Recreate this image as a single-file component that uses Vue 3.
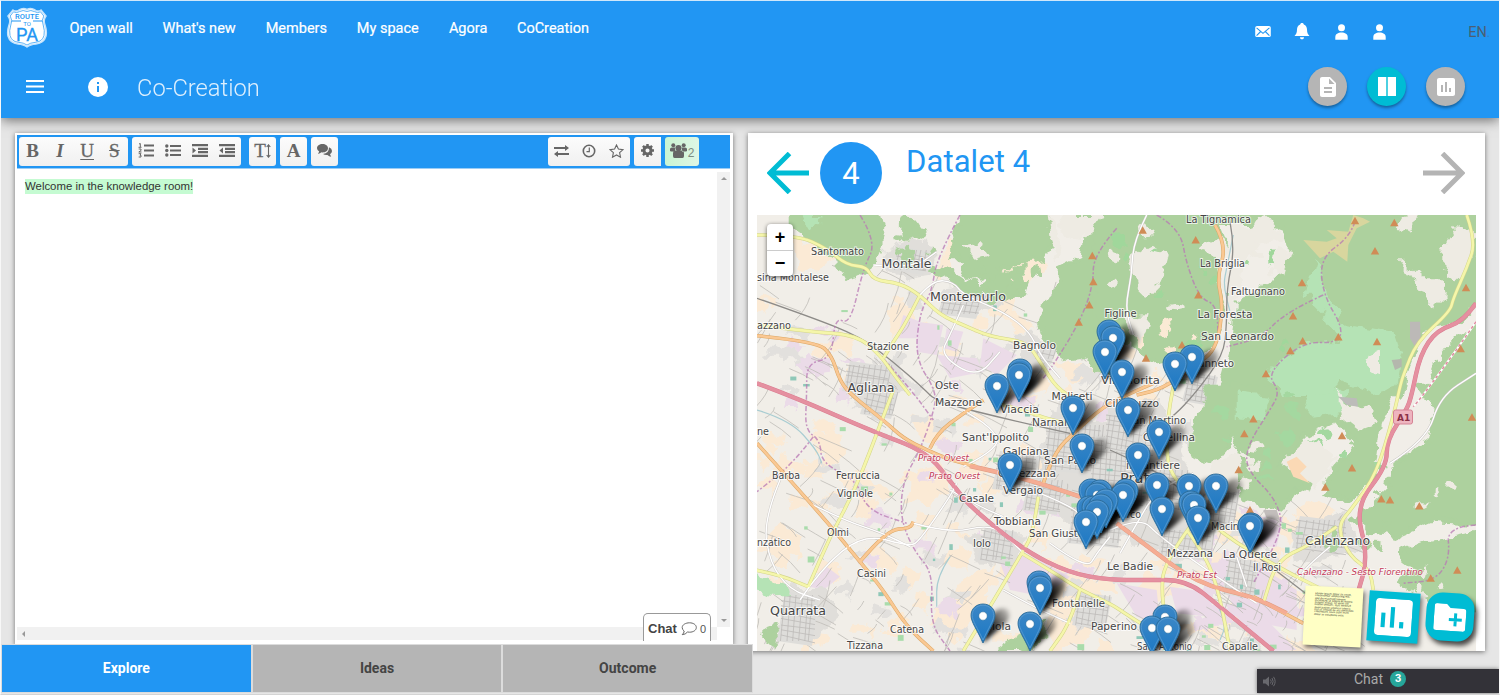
<script setup>
const nav = [
  ['Open wall', 64], ["What's new", 74], ['Members', 62], ['My space', 63], ['Agora', 39], ['CoCreation', 73],
]
const tabs = ['Explore', 'Ideas', 'Outcome']

/* Map geometry is kept in four sheets; each sheet has its own origin and a 1:3 scale. */
const origin = { A: [750, 125], B: [1110, 125], C: [750, 390], D: [1110, 390] }
const conv = (sheet, pts) => {
  const [ox, oy] = origin[sheet]
  return pts.trim().split(/\s+/).map((p) => {
    const [x, y] = p.split(',').map(Number)
    return [+(ox + x / 3).toFixed(1), +(oy + y / 3).toFixed(1)]
  })
}
const chain = (src) => {
  let out = []
  src.split('|').forEach((s) => { out = out.concat(conv(s[0], s.slice(1))) })
  return out
}
const poly = (src) => chain(src).map((p) => p.join(',')).join(' ')
const smooth = (src) => {
  const p = chain(src)
  let d = `M${p[0]}`
  for (let i = 1; i < p.length - 1; i++) {
    d += `Q${p[i]} ${(p[i][0] + p[i + 1][0]) / 2},${(p[i][1] + p[i + 1][1]) / 2}`
  }
  return d + `L${p[p.length - 1]}`
}

let seed = 11
const rnd = () => { seed = (seed * 16807) % 2147483647; return seed / 2147483647 }

const patches = []
const kinds = [['#fbead5', 140], ['#ebdbe8', 44], ['#e2e0dd', 65]]
kinds.forEach(([c, n]) => {
  for (let i = 0; i < n; i++) {
    const x = 757 + rnd() * 560
    const lim = x > 1190 ? 500 : 290
    const y = lim + rnd() * (655 - lim)
    const w = 8 + rnd() * 16
    const h = 6 + rnd() * 14
    const k = rnd() * 9 + 2
    patches.push({ c, p: `${x},${y} ${x + w},${y + k} ${x + w - k},${y + h + k} ${x + w / 2},${y + h} ${x - k},${y + h}` })
  }
})
const lanes = []
for (let i = 0; i < 380; i++) {
  const x = 757 + rnd() * 590
  const lim = x > 1190 ? 490 : 265
  const y = lim + rnd() * (655 - lim)
  const a = (rnd() < 0.5 ? 0.55 : 2.1) + (rnd() - 0.5) * 0.5
  const l = 9 + rnd() * 30
  lanes.push(`M${x},${y}q${Math.cos(a) * l * 0.5 + rnd() * 5},${Math.sin(a) * l * 0.5} ${Math.cos(a) * l},${Math.sin(a) * l}`)
}
const grids = []
;[[900, 250, 30, 20], [945, 298, 38, 16], [1040, 345, 18, 14], [850, 365, 42, 26], [868, 392, 30, 22], [785, 595, 34, 46],
  [985, 530, 32, 30], [1050, 425, 55, 45], [1095, 440, 62, 66], [1110, 415, 36, 34], [1075, 505, 50, 38], [1150, 470, 40, 40],
  [1205, 490, 35, 34], [1165, 530, 50, 26], [1300, 520, 50, 28], [1080, 595, 32, 30], [1000, 455, 40, 34], [1030, 480, 34, 30],
  [1190, 375, 28, 26], [1230, 560, 30, 34]].forEach(([x, y, w, h]) => {
  let d = ''
  for (let t = 0; t < w; t += 4 + rnd() * 3) d += `M${x + t},${y}l${-6 + rnd() * 3},${h}`
  for (let t = 0; t < h; t += 4 + rnd() * 3) d += `M${x - 4},${y + t}l${w},${4 + rnd() * 4}`
  grids.push({ box: `${x},${y - 4} ${x + w},${y + 2} ${x + w - 7},${y + h + 5} ${x - 8},${y + h}`, d })
})
const parks = []
for (let i = 0; i < 70; i++) {
  const x = 765 + rnd() * 540
  const lim = x > 1180 ? 520 : 300
  parks.push({ x, y: lim + rnd() * (650 - lim), w: 2 + rnd() * 5, h: 2 + rnd() * 4, c: i % 3 ? '#a9dcab' : '#8fc8b8' })
}
const glades = []
const glade = (x0, y0, w, h, n, c) => {
  for (let i = 0; i < n; i++) glades.push({ x: x0 + rnd() * w, y: y0 + rnd() * h, rx: 2 + rnd() * 6, ry: 2 + rnd() * 5, c })
}
glade(1110, 225, 150, 90, 9, '#eeebe3')
glade(1110, 320, 90, 50, 9, '#fbead5')
glade(1200, 440, 60, 70, 7, '#eeebe3')
glade(1060, 220, 240, 130, 14, '#a0d79b')
glade(1210, 390, 180, 90, 16, '#a4d8a0')
glade(1400, 485, 60, 30, 3, '#eeebe3')
glade(1410, 550, 50, 50, 4, '#eeebe3')
glade(890, 220, 70, 50, 12, '#add19e')
glade(950, 262, 90, 35, 14, '#add19e')
glade(1330, 510, 60, 45, 6, '#add19e')

const residential = [
  'A400,370 480,340 560,360 550,460 470,470 410,440', 'A560,490 640,480 760,530 690,560 590,530',
  'A340,740 440,700 480,790 400,810 290,810', 'C300,0 430,0 400,90 330,60', 'C110,590 230,600 260,690 200,740 90,720 130,650',
  'C900,60 1080,90 1080,470 980,420 860,300', 'D0,40 150,30 260,300 330,420 250,460 120,480 0,420',
  'D550,420 700,360 760,480 560,520', 'C640,430 820,430 800,530 690,520', 'A800,620 860,620 900,740 830,740',
]
const peach = [
  'A410,560 500,530 480,600 420,640', 'A770,410 890,400 880,440 800,500 790,560 860,610 810,620 720,560', 'A590,330 610,400 590,460 560,470',
  'A130,340 190,360 260,400 200,430 140,440', 'A910,700 1060,740 1040,760 960,770', 'C500,230 580,220 600,300 520,340 470,330',
  'C480,70 560,90 600,170 520,160', 'C260,260 340,330 390,320 350,230', 'C21,490 130,500 160,440 90,400', 'C880,500 1000,520 1080,640 1000,760 900,783',
  'C600,600 740,520 690,650 620,760 540,700', 'D580,330 670,360 640,440 540,450', 'D210,560 420,590 500,540 400,500',
]
const industrial = [
  'A460,570 510,590 500,640 440,640', 'A500,590 580,600 560,690 500,680', 'A590,610 640,620 620,680 580,670', 'A560,690 680,700 700,740 600,760', 'A700,640 800,690 740,750 690,720',
  'A150,700 240,700 240,740 160,750',
  'C740,490 850,500 960,560 880,620 780,600', 'C180,590 230,530 270,560 220,600', 'D20,580 140,600 150,700 80,680', 'D180,590 310,610 300,680 200,670',
  'D290,520 420,510 560,600 560,720 400,690', 'D340,640 440,660 560,780 480,783', 'D410,400 520,380 500,470 440,470',
]
const forest = [
  'A125,265 385,265 400,320 390,380 375,415 330,450 290,460 260,400 205,370 170,330 125,300',
  'A470,265 500,300 525,340 490,330 460,340 455,300', 'A605,400 600,350 635,265 885,265 905,350 880,400 790,410 750,440 780,480 830,470 820,510 720,520 700,470 640,450 650,400',
  'A540,440 580,430 640,470 700,490 690,520 620,480',
  'A960,265 1080,265 1100,310 1050,330 1000,350 990,400 930,430 940,470 900,510 870,590 890,650 950,700 1020,690 1050,740 1100,760 1100,265',
  'B-50,265 310,265 350,360 310,460 330,560 310,650 250,700 150,720 60,650 -50,620',
  'B395,265 1110,265 1110,350 1040,510 930,640 880,760 870,815 420,815 330,810 370,660 380,540 500,460 540,380 520,310',
  'D300,-10 870,-10 810,100 800,180 790,260 720,330 640,310 660,260 740,160 680,90 600,130 510,220 600,280 550,310 520,350 400,330 370,250 390,120 310,220 245,200 250,130',
  'B1110,600 1110,820 940,820 980,720 1040,640', 'B1110,380 1110,530 1050,590 970,600 1050,500',
  'D1110,-10 1110,400 970,390 850,440 770,420 750,380 830,300 840,230 880,210 960,150 980,60 930,-10',
  'D870,490 950,460 1110,430 1110,660 980,640 870,580 930,540', 'C740,783 860,710 880,700 880,740 800,783', 'C40,720 80,705 90,730 60,760',
]
const scrub = [
  'B620,410 590,510 640,560 690,650 580,655 470,745 510,810 660,810 700,770 790,810 860,790 875,700 850,625 710,600 660,520 635,470',
  'A150,270 215,270 210,300 170,305', 'C15,555 110,580 120,615 60,610 15,595', 'D380,10 480,20 460,90 380,80', 'D580,10 720,0 690,70 600,80', 'D600,230 620,180 670,210 640,260',
]
const clearings = [
  'A890,280 930,330 920,400 900,350', 'A940,270 1060,270 1010,340 960,330 920,300', 'A680,400 650,370 690,360 710,390',
  'B60,400 100,370 170,390 150,470 110,510 80,480', 'B270,370 340,340 350,400 300,390', 'B400,310 470,280 520,340 440,350 450,390 400,410 390,480 350,590 355,460 370,300', 'B500,370 540,380 520,450 480,440',
  'B1000,370 1040,310 1090,330 1080,410 1040,460 1000,430', 'B870,405 930,460 1000,460 1010,510 970,550 930,480', 'B770,700 810,680 810,750 780,740', 'B880,275 920,270 890,320 860,310',
  'D310,220 390,190 370,300 280,310', 'D680,10 720,60 770,40 800,100 750,120 700,80', 'D520,210 600,150 680,210 620,290 560,250', 'B50,580 110,570 90,650 60,620', 'D390,180 430,200 410,220',
]
const roads = [
  ['w', 'A370,420 490,430 560,380'], ['w', 'A510,510 550,465 610,470 640,510 760,560 840,620 870,690 930,760'], ['w', 'A640,540 600,630 570,690 680,760 750,680'],
  ['w', 'C90,270 40,390 60,520 120,600 210,630'], ['w', 'C150,630 210,540 340,430 480,470 510,450 600,320 620,280'], ['w', 'C180,340 280,390 400,430 480,470'],
  ['w', 'C490,400 600,430 710,405 760,430 820,490'], ['w', 'C760,600 850,650 960,700'], ['w', 'C600,300 690,350 760,380'],
  ['w', 'C640,230 760,170 720,110 640,60'], ['w', 'C870,310 970,350 1000,390'], ['w', 'C900,460 1010,540 1040,490 1080,440'],
  ['w', 'B110,270 70,350 65,450 45,550 70,630'], ['w', 'D0,420 90,380 150,440 290,540 440,640'], ['w', 'D30,490 80,400 140,300 250,250'],
  ['w', 'D840,220 950,150 990,20 1098,-50'], ['w', 'D660,470 600,520 560,570'], ['w', 'D380,500 410,590'],
  ['y', 'A21,330 140,330 230,370 290,420 350,425 370,465 450,475 510,510 570,570 640,600 720,635 830,650 870,710 920,790 |C980,30'],
  ['y', 'A510,510 470,590 430,650 400,700'], ['y', 'C430,0 370,160 310,310 240,440 175,590'], ['y', 'A21,600 180,620 320,630 390,690 440,760 480,810'],
  ['y', 'C15,540 90,555 175,590'], ['y', 'C865,320 850,430 815,490 720,650 640,783'], ['y', 'C815,490 900,540 990,600 1080,640|D60,680 140,730'],
  ['y', 'C990,600 960,700 900,783'], ['y', 'C740,40 820,60 900,90 960,100'],
  ['y', 'B1070,270 1098,350 1070,430 1030,520 1020,560 920,650 880,750|D870,-10 850,80 800,250 730,350 680,410 720,500 780,540 790,600'],
  ['y', 'D680,410 600,465 500,510 460,640'], ['y', 'D240,410 160,520 155,620 170,700'], ['y', 'D230,420 290,500 330,620 360,783'], ['y', 'D190,-10 150,190 230,320 330,430 520,540 640,600'],
  ['o', 'A21,632 200,650 245,690 270,770 310,815|C400,90 460,145 530,180 600,210 680,230'], ['o', 'C21,160 210,370 330,515 400,600 470,710 550,783'],
  ['o', 'C330,515 410,420 480,415 490,395'], ['o', 'C540,175 560,130 640,70 700,30'], ['o', 'C880,280 910,190 980,120 1060,50|D60,10 130,-20'],
  ['o', 'B315,300 350,360 320,460 340,540 320,670 260,720 160,790 80,810'], ['o', 'D430,620 580,700'],
  ['s', 'C660,228 760,250 870,280 990,320'], ['s', 'D20,400 100,460 260,580 430,620 530,670'],
  ['p', 'A21,775 130,815|C370,125 530,185 610,285 660,350 820,480 960,550 1080,570|D100,570 230,570 330,650 490,783'],
  ['p', 'B1098,535 1060,590 980,615 930,690 905,810|D890,60 830,150 830,230 735,350 775,500 740,620'],
]
const style = { w: ['#c9c5c2', 2.2, '#fff', 1.4], y: ['#d3d58a', 3.6, '#f5f6aa', 2.6], o: ['#dba765', 3.6, '#fac893', 2.6], s: ['#df9a80', 4.4, '#f5ad94', 3.6], p: ['#d97b90', 4.4, '#e590a0', 3.6] }
const drawn = roads.map(([k, s]) => ({ k, d: smooth(s) }))
const rails = ['A21,520 180,575 330,635 430,710 520,790|C560,35 760,85 960,130', 'D0,180 70,210 200,280 300,400 430,490 600,620', 'B360,290 375,370 350,490 350,600 340,690 260,800|D190,80 150,100']
const borders = [
  'A630,270 560,400 545,500 510,560 495,700 560,800|C550,70 510,180 460,270 450,380 490,480 550,550 540,700 600,783',
  'A330,270 380,350 340,430 300,600 255,575 245,700 170,715 170,810|C165,120 210,150 215,220 320,270 350,360 470,400', 'C190,140 130,220 21,305',
  'A1100,310 1030,390 1030,480 990,590 910,720 880,760', 'B140,270 210,310 230,420 270,520 320,540 325,640',
  'B735,290 720,335 630,400 640,510 700,610 680,655 580,650 470,745 510,800|D480,60 410,170 410,240 500,330 520,420 430,580',
  'B640,510 530,560 450,640 350,665', 'D1098,405 1010,410 1020,500 980,570 880,580', 'A400,700 480,790|C550,90',
]
const streams = ['C21,60 120,90 200,180 215,220', 'B370,330 350,430 340,480 360,560', 'D320,640 350,700 330,750', 'C600,500 560,560 560,650']
const peaks = chain('B98,316 257,345 735,287 853,293 795,378 576,473 265,510 549,573 685,636 578,648 541,677 801,650 468,746 108,700 216,660 1068,488 1052,671|A1027,392 1030,470 1018,540 986,592|D430,87 403,131 696,137 726,234 386,239 646,292 814,327 840,330 928,348 420,360 1086,82 1042,541 962,565')

const labels = [
  ['Santomato', 811, 254.5, 53], ['Montale', 881.5, 268, 50, 1], ['Montemurlo', 930, 300.5, 76, 1], ['sina Montalese', 757, 281, 72],
  ['azzano', 757, 328.5, 34], ['Stazione', 867, 350, 42], ['Bagnolo', 1013, 348.5, 43], ['Agliana', 847.5, 392, 47, 1], ['Oste', 935, 388.5, 24],
  ['La Tignamica', 1186, 223, 65], ['La Briglia', 1200, 266.5, 45], ['Faltugnano', 1231, 294.5, 54], ['La Foresta', 1197.5, 318, 55],
  ['San Leonardo', 1201, 339.5, 73], ['Figline', 1104.5, 316.5, 32], ['Canneto', 1191, 367, 43], ['Villafiorita', 1101, 383.5, 59],
  ['Mazzone', 935, 405.5, 47], ['Viaccia', 1000, 412.5, 39], ['Maliseti', 1051.5, 400, 41], ['Narnali', 1032, 425.5, 38],
  ['Cilianuzzo', 1105, 407, 54], ['San Martino', 1127, 424, 59], ['Castellina', 1143, 441, 52], ["Sant'Ippolito", 962, 441, 67],
  ['Galciana', 1003, 455, 46], ['San Paolo', 1044, 463.5, 52], ['Prato Ovest', 918, 460.5, 51, 2], ['Prato Ovest', 929, 478.5, 51, 2],
  ['Capezzana', 998, 477, 58], ['Vergaio', 1003, 494, 40], ['Casale', 959, 502, 35], ['Tobbiana', 994, 524.5, 47], ['San Giusto', 1029, 537, 55],
  ['Iolo', 973, 546.5, 18], ['ne', 757, 434.5, 12], ['Barba', 772, 479, 28], ['Ferruccia', 836, 479, 44], ['Vignole', 837, 497, 36],
  ['Olmi', 827, 535.5, 22], ['nzatico', 757, 546, 34], ['Casini', 857, 576.5, 29], ['Quarrata', 770, 615, 56, 1], ['Catena', 890, 633, 34],
  ['Tizzana', 847, 649, 36], ['Fontanelle', 1052, 607, 53], ['Paperino', 1091, 630, 46], ['Viola', 985, 630, 26], ['il Cantiere', 1126, 469, 54],
  ['Prato', 1120, 483, 38, 3], ['San Marco', 1092, 518, 49], ['Macinaia', 1211, 530, 42], ['Mezzana', 1167, 557, 46], ['La Querce', 1223, 558, 54],
  ['Il Rosi', 1253, 571, 28], ['Le Badie', 1107, 570, 46], ['Prato Est', 1177, 577.5, 40, 2], ['Calenzano', 1305, 544.5, 65, 1],
  ['Calenzano - Sesto Fiorentino', 1297, 574.5, 126, 2], ['Capalle', 1222, 650, 36], ["Sant'Antonio", 1137, 650, 55],
]
const cls = ['small', 'town', 'exit', 'city']
const pins = [
  [1109, 332], [1113, 338], [1105, 352], [1122, 372], [1192, 357], [1175, 364], [1020, 371], [1019, 375], [997, 386], [1073, 408],
  [1128, 410], [1159, 432], [1082, 446], [1138, 455], [1010, 465], [1157, 485], [1189, 486], [1216, 486], [1091, 491], [1100, 492], [1126, 491], [1123, 495],
  [1097, 495], [1106, 501], [1191, 503], [1194, 505], [1162, 509], [1089, 508], [1094, 508], [1101, 506], [1097, 512], [1198, 518], [1086, 522],
  [1251, 525], [1250, 526], [1039, 583], [1040, 588], [983, 616], [1030, 624], [1165, 617], [1152, 628], [1168, 629],
]
</script>

<template>
  <div class="page">
    <header class="top">
      <div class="nav-row">
        <svg class="logo" viewBox="0 0 42 42" width="42" height="42">
          <path d="M7 3 Q10 5 13 3 Q17 .5 21 2.500 Q25 .5 29 3 Q32 5 35 3 L40 9 Q37 13 39 18 Q41 24 40 29 Q38 36 30 37 Q24 37.500 21 40 Q18 37.500 12 37 Q4 36 2 29 Q1 24 3 18 Q5 13 2 9Z" fill="#fff" stroke="#c5e4fd" stroke-width="1.500" />
          <path d="M7.500 4.800 Q10.500 6.500 13.500 4.600 Q17 2.500 21 4.500 Q25 2.500 28.500 4.600 Q31.500 6.500 34.500 4.800 L37.800 9 Q35 13.500 37.200 18 Q39 24 38 28.500 Q36.500 34.500 30 35.200 Q24 35.800 21 38 Q18 35.800 12 35.200 Q5.500 34.500 4 28.500 Q3 24 4.800 18 Q7 13.500 4.200 9Z" fill="none" stroke="#4eabf5" stroke-width=".9" />
          <path d="M5.500 14H15M27 14H36.500" stroke="#2196f3" stroke-width="1.100" />
          <text x="21" y="12" text-anchor="middle" class="lg1" textLength="24">ROUTE</text>
          <text x="21" y="18.700" text-anchor="middle" class="lg2">TO</text>
          <text x="21" y="34" text-anchor="middle" class="lg3" textLength="22" lengthAdjust="spacingAndGlyphs">PA</text>
        </svg>
        <nav><a v-for="n in nav" :key="n[0]" :style="{ width: n[1] + 'px' }">{{ n[0] }}</a></nav>
        <div class="status">
          <svg width="16" height="11" viewBox="0 0 17 12"><rect width="17" height="12" rx="2" fill="#fff" /><path d="M1.500 2 8.500 8 15.500 2M1.500 10.500 6 6M15.500 10.500 11 6" fill="none" stroke="#2196f3" stroke-width="1.200" /></svg>
          <svg width="16" height="17" viewBox="0 0 16 17"><path d="M8 0C9 0 9.700.6 9.800 1.400 12 2.200 13 4.200 13 6.500 13 10 14 11.500 15.500 13H.5C2 11.500 3 10 3 6.500 3 4.200 4 2.200 6.200 1.400 6.300.6 7 0 8 0ZM6 14.200H10C10 15.500 9.200 16.300 8 16.300S6 15.500 6 14.200Z" fill="#fff" /></svg>
          <svg v-for="i in 2" :key="i" width="13" height="16" viewBox="0 0 13 16"><circle cx="6.500" cy="3.700" r="3.500" fill="#fff" /><path d="M.3 15.700V13C.3 10 3 8.400 6.500 8.400S12.700 10 12.700 13V15.700Z" fill="#fff" /></svg>
        </div>
        <span class="lang">EN<i>.</i></span>
      </div>
      <div class="title-row">
        <svg class="menu" width="18" height="13" viewBox="0 0 18 13"><path d="M0 1H18M0 6.500H18M0 12H18" stroke="#fff" stroke-width="1.900" /></svg>
        <svg class="info" width="20" height="20" viewBox="0 0 20 20"><circle cx="10" cy="10" r="10" fill="#fff" /><path d="M9 5h2v2H9ZM9 9h2v6H9Z" fill="#2196f3" /></svg>
        <h1>Co-Creation</h1>
        <div class="rounds">
          <button><svg viewBox="0 0 24 24" width="24" height="24"><path fill="#fff" d="M14 2H6c-1.100 0-1.990.9-1.990 2L4 20c0 1.100.89 2 1.990 2H18c1.100 0 2-.9 2-2V8l-6-6zm2 16H8v-2h8v2zm0-4H8v-2h8v2zm-3-5V3.500L18.500 9H13z" /></svg></button>
          <button class="on"><svg viewBox="0 0 18 19" width="18" height="19"><path fill="#fff" d="M0 0H8.300V19H0ZM9.700 0H18V19H9.700Z" /></svg></button>
          <button><svg viewBox="0 0 24 24" width="24" height="24"><path fill="#fff" d="M19 3H5c-1.100 0-2 .9-2 2v14c0 1.100.9 2 2 2h14c1.100 0 2-.9 2-2V5c0-1.100-.9-2-2-2zM9 17H7v-7h2v7zm4 0h-2V7h2v10zm4 0h-2v-4h2v4z" /></svg></button>
        </div>
      </div>
    </header>

    <main>
      <section class="editor">
        <div class="toolbar">
          <div class="grp">
            <b class="t">B</b><i class="t it">I</i><span class="t un">U</span><span class="t st">S</span>
          </div>
          <div class="grp g2">
            <span class="ic"><svg width="16" height="15" viewBox="0 0 16 15"><path d="M6 2.500H16M6 7.500H16M6 12.500H16" stroke="#666" stroke-width="2" /><path d="M1 1 2.300.5V4M.5 4.300H3.500M.7 6H3V7.500L.8 9H3.500M.7 10.700H3L2 12.300H3V14H.7" fill="none" stroke="#666" stroke-width="1" /></svg></span>
            <span class="ic"><svg width="16" height="13" viewBox="0 0 16 13"><path d="M5 2H16M5 6.500H16M5 11H16" stroke="#666" stroke-width="2.200" /><circle cx="1.800" cy="2" r="1.700" fill="#666" /><circle cx="1.800" cy="6.500" r="1.700" fill="#666" /><circle cx="1.800" cy="11" r="1.700" fill="#666" /></svg></span>
            <span class="ic"><svg width="16" height="13" viewBox="0 0 16 13"><path d="M0 1.200H16M6 4.800H16M6 8.200H16M0 11.800H16" stroke="#666" stroke-width="2.300" /><path d="M.5 3.500 4 6.500.5 9.500Z" fill="#666" /></svg></span>
            <span class="ic"><svg width="16" height="13" viewBox="0 0 16 13"><path d="M0 1.200H16M6 4.800H16M6 8.200H16M0 11.800H16" stroke="#666" stroke-width="2.300" /><path d="M4 3.500.5 6.500 4 9.500Z" fill="#666" /></svg></span>
          </div>
          <div class="grp one g3"><span class="t th">T<svg width="5" height="14" viewBox="0 0 5 14"><path d="M2.500 1V13M.7 3 2.500.8 4.300 3M.7 11 2.500 13.200 4.300 11" fill="none" stroke="#666" stroke-width="1.100" /></svg></span></div>
          <div class="grp one"><b class="t">A</b></div>
          <div class="grp one"><span class="ic"><svg width="15" height="13" viewBox="0 0 15 13"><path d="M5.500 0C8.600 0 11 1.800 11 4.200S8.600 8.400 5.500 8.400L4.500 8.300Q3 9.700 1 9.900L2.200 7.500Q0 6.300 0 4.200C0 1.800 2.400 0 5.500 0Z" fill="#666" /><path d="M12 3.200Q15 4.500 15 7 15 9 13 10.200L14.200 12.700Q12 12.500 10.500 11L9.500 11.100Q7.500 11.100 6 10 12 9.300 12 3.200Z" fill="#666" /></svg></span></div>
          <div class="grp right">
            <span class="ic"><svg width="15" height="12" viewBox="0 0 15 12"><path d="M0 3H12M3 9H15" stroke="#666" stroke-width="1.800" /><path d="M11 0 15 3 11 6ZM4 6 0 9 4 12Z" fill="#666" /></svg></span>
            <span class="ic"><svg width="14" height="14" viewBox="0 0 14 14"><circle cx="7" cy="7" r="5.700" fill="none" stroke="#666" stroke-width="1.600" /><path d="M7.300 3.500V7.600H4.500" fill="none" stroke="#666" stroke-width="1.200" /></svg></span>
            <span class="ic"><svg width="15" height="14" viewBox="0 0 15 14"><path d="M7.500 1 9.400 5.100 14 5.600 10.600 8.700 11.500 13.200 7.500 11 3.500 13.200 4.400 8.700 1 5.600 5.600 5.100Z" fill="none" stroke="#666" stroke-width="1.100" /></svg></span>
          </div>
          <div class="grp one sq"><span class="ic"><svg width="13" height="13" viewBox="0 0 14 14"><circle cx="7" cy="7" r="3.800" fill="none" stroke="#666" stroke-width="3.200" /><path d="M7 0V3M7 11V14M0 7H3M11 7H14M2.100 2.100 4 4M10 10 11.900 11.900M11.900 2.100 10 4M4 10 2.100 11.900" stroke="#666" stroke-width="2.700" /></svg></span></div>
          <div class="grp users">
            <svg width="17" height="15" viewBox="0 0 17 15"><circle cx="3.300" cy="2.200" r="2" fill="#666" /><circle cx="13.700" cy="2.200" r="2" fill="#666" /><path d="M0 8V6Q0 4.400 2 4.400H5V8.500H1ZM17 8V6Q17 4.400 15 4.400H12V8.500H16ZM3 13V10Q3 7.600 5.500 7.600H11.500Q14 7.600 14 10V13Q14 15 12.500 15H4.500Q3 15 3 13Z" fill="#666" /><circle cx="8.500" cy="5" r="3.100" fill="#666" /></svg><span>2</span>
          </div>
        </div>
        <div class="pad">
          <div class="text"><mark>Welcome in the knowledge room!</mark></div>
          <div class="vbar"><i class="up"></i><i class="down"></i></div>
          <div class="hbar"><i></i></div>
          <div class="chatbox"><b>Chat</b><svg width="16" height="14" viewBox="0 0 16 14"><path d="M8.500.8C12.300.8 15.300 2.700 15.300 5.500S12.300 10.200 8.500 10.200L6.500 10Q4.500 12.500 1.200 12.700 3 11.200 3.200 9Q1.200 7.800 1.200 5.500C1.200 2.700 4.700.8 8.500.8Z" fill="none" stroke="#666" stroke-width="1" /></svg><span>0</span></div>
        </div>
        <div class="tabs"><div v-for="(t, i) in tabs" :key="t" :class="{ active: i === 0 }">{{ t }}</div></div>
      </section>

      <section class="datalet">
        <div class="dhead">
          <svg width="42" height="42" viewBox="0 0 42 42"><path d="M22.500 1.500 3 21 22.500 40.500M4 21H42" fill="none" stroke="#00bcd4" stroke-width="5" /></svg>
          <div class="num">4</div>
          <h2>Datalet 4</h2>
          <svg class="next" width="42" height="42" viewBox="0 0 42 42"><path d="M19.500 1.500 39 21 19.500 40.500M38 21H0" fill="none" stroke="#b4b4b4" stroke-width="5" /></svg>
        </div>
        <div class="map">
          <svg viewBox="757 215 719 436" width="719" height="436">
            <defs>
              <linearGradient id="pinfill" x1="0" y1="0" x2="0" y2="1"><stop offset="0" stop-color="#3c87c6" /><stop offset="1" stop-color="#1b78c4" /></linearGradient>
              <linearGradient id="shade" x1="0" y1="1" x2="1" y2="0"><stop offset="0" stop-color="#000" /><stop offset=".45" stop-color="#000" stop-opacity=".8" /><stop offset="1" stop-color="#000" stop-opacity=".1" /></linearGradient>
              <filter id="soft" x="-50%" y="-50%" width="200%" height="200%"><feGaussianBlur stdDeviation="2" /></filter>
              <filter id="rough" filterUnits="userSpaceOnUse" x="757" y="215" width="719" height="436"><feTurbulence type="fractalNoise" baseFrequency=".07" numOctaves="3" seed="4" /><feDisplacementMap in="SourceGraphic" scale="15" xChannelSelector="R" yChannelSelector="G" /></filter>
              <g id="pin"><path d="M0-12C6.800-12 12-7.200 12-.5 12 6 6 13.500 0 27-6 13.500-12 6-12-.5-12-7.200-6.800-12 0-12Z" fill="url(#pinfill)" stroke="#2e6c97" stroke-width=".9" /><path d="M0-10.800C6-10.800 10.800-6.500 10.800-.5 10.800 4.500 5 13 0 24-5 13-10.800 4.500-10.800-.5-10.800-6.500-6-10.800 0-10.800Z" fill="none" stroke="#5c9dd2" stroke-width=".8" /><circle r="4.200" fill="#fff" stroke="#2e6c97" stroke-width=".5" /></g>
            </defs>
            <rect x="757" y="215" width="719" height="436" fill="#f1eee8" />
            <g filter="url(#rough)">
              <polygon v-for="(p, i) in peach" :key="'pe' + i" :points="poly(p)" fill="#fbead5" />
              <polygon v-for="(p, i) in patches" :key="'pa' + i" :points="p.p" :fill="p.c" />
            </g>
            <polygon v-for="(p, i) in industrial" :key="'in' + i" :points="poly(p)" fill="#ebdbe8" />
            <g filter="url(#rough)"><polygon v-for="(p, i) in residential" :key="'re' + i" :points="poly(p)" fill="#e0deda" /></g>
            <path v-for="(p, i) in lanes" :key="'la' + i" :d="p" fill="none" stroke="#bfbcb8" stroke-width=".8" />
            <g v-for="(g, i) in grids" :key="'gr' + i"><polygon :points="g.box" fill="#deddda" /><path :d="g.d" fill="none" stroke="#bebbb9" stroke-width=".8" /></g>
            <rect v-for="(p, i) in parks" :key="'pk' + i" :x="p.x" :y="p.y" :width="p.w" :height="p.h" :fill="p.c" />
            <g filter="url(#rough)">
              <polygon v-for="(p, i) in forest" :key="'fo' + i" :points="poly(p)" fill="#add19e" stroke="#add19e" stroke-width="4" stroke-linejoin="round" />
              <path d="M1090 205H1480V225H1090ZM1472 220H1490V240H1472Z" fill="#add19e" />
              <polygon v-for="(p, i) in scrub" :key="'sc' + i" :points="poly(p)" fill="#b5e3b5" />
              <ellipse v-for="(g, i) in glades" :key="'gl' + i" :cx="g.x" :cy="g.y" :rx="g.rx" :ry="g.ry" :fill="g.c" />
              <polygon v-for="(p, i) in clearings" :key="'cl' + i" :points="poly(p)" fill="#eeebe3" stroke="#eeebe3" stroke-width="2" stroke-linejoin="round" />
            </g>
            <polygon :points="poly('B580,345 650,350 680,340 650,315 715,320 730,270 760,280 780,290 740,310 715,360 712,410 670,380 630,400')" fill="#d8d69e" />
            <polygon :points="poly('D560,200 590,230 570,250 600,280 550,260 530,215')" fill="#fbd9b5" />
            <polygon :points="poly('B900,590 930,590 932,640 915,665 900,640')" fill="#bcb9b7" />
            <polygon :points="poly('B845,705 875,702 875,725 855,735')" fill="#b4b7ad" />
            <polygon :points="poly('D685,20 740,25 745,50 710,45')" fill="#bcbcb9" />
            <polygon :points="poly('D460,360 500,360 510,390 470,385')" fill="#c2bdbb" />
            <path v-for="(s, i) in streams" :key="'st' + i" :d="smooth(s)" fill="none" stroke="#a9cdd2" stroke-width="1.200" />
            <path v-for="(s, i) in rails" :key="'ra' + i" :d="smooth(s)" fill="none" stroke="#8d8b88" stroke-width="1.300" />
            <path v-for="(s, i) in borders" :key="'bo' + i" :d="smooth(s)" fill="none" stroke="#b878b4" stroke-width="1.500" stroke-dasharray="5 2 2 2" opacity=".75" />
            <path v-for="(r, i) in drawn" :key="'rc' + i" :d="r.d" fill="none" :stroke="style[r.k][0]" :stroke-width="style[r.k][1]" />
            <path v-for="(r, i) in drawn" :key="'rf' + i" :d="r.d" fill="none" :stroke="style[r.k][2]" :stroke-width="style[r.k][3]" />
            <path :d="smooth('B1098,590 1050,660 940,810|D910,50')" fill="none" stroke="#fff" stroke-width="2" />
            <path :d="smooth('B1098,590 1050,660 940,810|D910,50')" fill="none" stroke="#df8ca0" stroke-width="1.500" stroke-dasharray="3 2.500" />
            <path v-for="(p, i) in peaks" :key="'tr' + i" :d="`M${p[0]},${p[1] - 4}l4.200,7.500h-8.400z`" fill="#d08c56" />
            <text v-for="(l, i) in labels" :key="'tx' + i" :x="l[1]" :y="l[2]" :textLength="l[3]" lengthAdjust="spacingAndGlyphs" :class="cls[l[4] || 0]">{{ l[0] }}</text>
            <rect x="1393.500" y="410" width="19" height="14" rx="2" fill="#eeb4bf" stroke="#d58495" /><text x="1397" y="421" class="a1">A1</text>
            <path v-for="(p, i) in pins" :key="'sh' + i" :d="`M${p[0]},${p[1] + 27}l4,-22q10,-16 20,-12q6,6 -2,15z`" fill="url(#shade)" filter="url(#soft)" />
            <use v-for="(p, i) in pins" :key="'pi' + i" href="#pin" :x="p[0]" :y="p[1]" />
          </svg>
          <div class="zoom"><span>+</span><span>−</span></div>
          <div class="widgets">
            <div class="note"><p>Lorem ipsum dolor sit amet, consectetur adipiscing elit, sed do eiusmod tempor incididunt ut labore et dolore magna aliqua. Ut enim ad minim veniam, quis nostrud exercitation ullamco laboris nisi ut aliquip ex ea commodo consequat. Duis aute irure dolor in voluptate velit</p></div>
            <div class="chart"><svg viewBox="0 0 36 36" width="37" height="37"><rect width="36" height="36" rx="4" fill="#fff" /><path d="M8 14V28M17 8V28M26 22V28" stroke="#00bcd4" stroke-width="4" /></svg></div>
            <div class="folder"><svg viewBox="0 0 32 27" width="32" height="27"><path d="M3 0H12L16 4H29Q32 4 32 7V24Q32 27 29 27H3Q0 27 0 24V3Q0 0 3 0Z" fill="#fff" /><path d="M21.500 9V22M15 15.500H28" stroke="#00bcd4" stroke-width="3" /></svg></div>
          </div>
        </div>
      </section>
    </main>

    <div class="chatbar">
      <svg width="13" height="11" viewBox="0 0 13 11"><path d="M0 3.500H2.500L6 .5V10.500L2.500 7.500H0Z" fill="#69696e" /><path d="M7.500 3.500Q9 5.500 7.500 7.500M9 2Q11.300 5.500 9 9M10.500.8Q13.800 5.500 10.500 10.200" fill="none" stroke="#69696e" /></svg>
      <span>Chat</span><b>3</b>
    </div>
  </div>
</template>

<style>
body { background: #e6e6e6; overflow: hidden; }
</style>

<style scoped>
* { box-sizing: border-box; }
.page { position: relative; width: 1500px; height: 695px; font-family: Roboto, "Liberation Sans", sans-serif; background: #e6e6e6; border: 1px solid #f8f8f8; border-top-color: #cfe7fa; border-bottom-color: #d4d4d4; overflow: hidden; }
.top { position: relative; z-index: 3; height: 117px; background: #2196f3; box-shadow: 0 2px 12px rgba(0, 0, 0, .55); padding: 0 34px 0 6px; }
.nav-row { display: flex; height: 55px; align-items: flex-start; }
.logo { margin-top: 6px; margin-left: -1px; }
.lg1 { font: 500 7.500px Roboto, sans-serif; fill: #2196f3; }
.lg2 { font: 6px Roboto, sans-serif; fill: #2196f3; }
.lg3 { font: 400 17.500px Roboto, sans-serif; fill: #2196f3; stroke: #2196f3; stroke-width: .3px; }
nav { display: flex; gap: 29.100px; margin: 19px 0 0 21.500px; }
nav a { color: #fff; font-size: 14.500px; line-height: 18px; white-space: nowrap; -webkit-text-stroke: .2px #fff; }
.status { display: flex; align-items: center; margin: 22px 0 0 auto; height: 17px; gap: 23.500px; }
.status svg:nth-child(3) { margin-left: 1px; }
.status svg:nth-child(4) { margin-left: 2px; }
.lang { color: #4b5f74; font-size: 14.500px; line-height: 18px; margin: 23px -25px 0 82px; }
.lang i { font-size: 12px; opacity: .5; }
.title-row { display: flex; align-items: center; height: 61px; }
.menu { margin: 0 0 0 19px; }
.info { margin: 0 0 0 43.500px; }
h1 { margin: 3px 0 0 29.500px; font-size: 23.700px; font-weight: 300; line-height: 30px; color: #fff; opacity: .85; }
.rounds { display: flex; gap: 20px; margin-left: auto; }
button { width: 39px; height: 39px; padding: 0; border: 0; border-radius: 50%; background: #b5b5b5; display: flex; align-items: center; justify-content: center; box-shadow: 0 2px 3px rgba(0, 0, 0, .35); }
button.on { background: #00bcd4; }
main { display: flex; padding: 15px 0 0 14px; height: 576px; }
.editor { width: 718px; height: 512px; background: #fff; box-shadow: 0 1px 5px rgba(0, 0, 0, .5); padding: 2px 3px 0 2px; display: flex; flex-direction: column; flex: none; position: relative; z-index: 1; }
.toolbar { height: 34px; background: #2196f3; display: flex; padding: 1.500px 31px 3px 2px; border-bottom: 1px solid #9ccdf5; flex: none; }
.grp { display: flex; height: 29px; border-radius: 3px; background: linear-gradient(#fcfcfc, #f0f0f0); margin-right: 4px; width: 109px; color: #666; justify-content: space-around; align-items: center; padding-bottom: 1px; }
.g2 { margin-right: 8px; }
.one { width: 27px; }
.t { width: 27px; text-align: center; font-family: "Liberation Serif", serif; font-size: 19px; line-height: 27px; }
.it { font-weight: bold; }
.un { text-decoration: underline; text-underline-offset: 2px; -webkit-text-stroke: .3px #666; }
.st { text-decoration: line-through; -webkit-text-stroke: .3px #666; }
.th { display: flex; align-items: center; justify-content: center; -webkit-text-stroke: .3px #666; }
.ic { width: 27px; display: flex; justify-content: center; }
.right { width: 82px; margin-left: auto; }
.users { width: 34px; margin: 0; background: linear-gradient(90deg, #c9f5d3, #dff6e5); justify-content: center; gap: 1px; }
.users span { font: 12px "Liberation Sans", sans-serif; margin-top: 4px; color: #7d8b80; }
.sq { border-radius: 3px 0 0 3px; }
.pad { position: relative; display: grid; grid-template: 1fr 13px / 1fr 13px; flex: 1; padding: 3px 0 5px; }
.text { padding: 7px 8px; font: 11.400px/15px "Liberation Sans", Arial, sans-serif; }
mark { background: #c5fbd2; color: #333; display: inline-block; height: 15px; }
.vbar { background: #f1f1f1; display: flex; flex-direction: column; justify-content: space-between; align-items: center; padding: 5px 0; }
.hbar { background: #f1f1f1; display: flex; align-items: center; padding-left: 5px; }
.up, .down { border: 3px solid transparent; }
.up { border-top: 0; border-bottom-color: #999; }
.down { border-bottom: 0; border-top-color: #999; }
.hbar i { border: 3px solid transparent; border-left: 0; border-right-color: #999; }
.chatbox { position: absolute; left: 626px; bottom: 4px; width: 68px; height: 28px; border: 1px solid #999; border-bottom: 0; border-radius: 5px 5px 0 0; background: #fff; display: flex; align-items: center; padding: 2px 0 0 4px; font: 12px "Liberation Sans", sans-serif; color: #555; }
.chatbox b { font-size: 13px; margin-right: 4px; color: #444; }
.chatbox span { margin-left: 3px; font-size: 11px; }
.tabs { display: flex; gap: 2px; width: 750px; height: 47px; margin: 0 0 -47px -15px; flex: none; }
.tabs div { flex: 1; background: #b5b5b5; color: #444; font-size: 14px; font-weight: bold; line-height: 47px; text-align: center; box-shadow: 0 0 0 1px #dcdcdc; }
.tabs .active { background: #2196f3; color: #fff; }
.datalet { margin-left: 15px; width: 737px; height: 518px; flex: none; background: #fff; box-shadow: 0 1px 5px rgba(0, 0, 0, .5); padding: 0 9px; display: flex; flex-direction: column; }
.dhead { height: 82px; display: flex; align-items: center; padding: 0 11px 2px 10px; flex: none; }
.num { width: 62px; height: 62px; border-radius: 50%; background: #2196f3; color: #fff; font-size: 31px; line-height: 63px; text-align: center; margin: 0 24px 0 11px; }
h2 { margin: 0 0 23px; font-size: 31px; line-height: 36px; font-weight: 400; color: #2196f3; letter-spacing: .1px; }
.next { margin-left: auto; }
.map { position: relative; width: 719px; height: 436px; }
.map > svg { display: block; }
text { font-family: "DejaVu Sans", sans-serif; }
.small, .town, .city { fill: #454545; paint-order: stroke; stroke: rgba(255, 255, 255, .75); stroke-width: 1.800px; }
.small { font-size: 10px; }
.town { font-size: 12.500px; }
.city { font-size: 14px; }
.exit { font-size: 9.500px; font-style: italic; fill: #c33a58; paint-order: stroke; stroke: rgba(255, 255, 255, .7); stroke-width: 1.500px; }
.a1 { font-size: 9px; font-weight: bold; fill: #8a3045; }
.zoom { position: absolute; left: 10px; top: 9px; width: 26px; height: 52px; border-radius: 4px; background: #fff; box-shadow: 0 1px 4px rgba(0, 0, 0, .6); font: bold 18px/26px "Liberation Sans", sans-serif; text-align: center; color: #000; }
.zoom span { display: block; height: 26px; }
.zoom span + span { border-top: 1px solid #ccc; line-height: 24px; }
.widgets { position: absolute; right: 2px; bottom: 5px; display: flex; align-items: center; gap: 6px; }
.note { width: 58px; height: 59px; background: #ffffc5; transform: rotate(3deg); box-shadow: 2px 3px 4px rgba(0, 0, 0, .5); padding: 7px 8px 0 10px; color: #222; overflow: hidden; }
.note p { margin: 0; font: 2.600px/2.300px "DejaVu Sans", sans-serif; }
.chart { width: 51px; height: 50px; background: #00bcd4; transform: rotate(4deg); display: flex; align-items: center; justify-content: center; box-shadow: 2px 3px 5px rgba(0, 0, 0, .55); }
.folder { width: 48px; height: 48px; margin-left: 1px; border-radius: 16px; background: #00bcd4; transform: rotate(4deg); display: flex; align-items: center; justify-content: center; box-shadow: 3px 4px 5px rgba(0, 0, 0, .7); }
.chatbar { position: absolute; left: 1256px; top: 668px; width: 242px; height: 24px; background: #333238; display: flex; align-items: center; box-shadow: 0 0 4px rgba(0, 0, 0, .5); z-index: 4; padding-left: 6px; color: #aaa; font-size: 14px; }
.chatbar span { margin: -4px 7px 0 78px; }
.chatbar b { width: 16px; height: 16px; border-radius: 50%; background: #26a69a; color: #fff; font-size: 11px; line-height: 16px; text-align: center; margin-top: -4px; }
</style>
